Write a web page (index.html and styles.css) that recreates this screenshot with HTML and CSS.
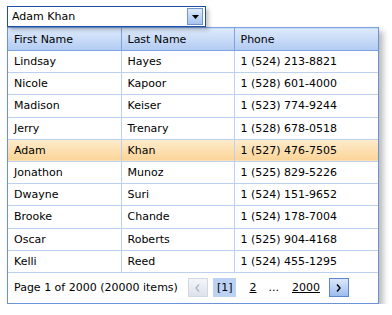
FILE: index.html
```html
<!DOCTYPE html>
<html>
<head>
<meta charset="utf-8">
<link rel="stylesheet" href="styles.css">
</head>
<body>
<div class="wrap">
  <div class="combo">
    <span class="combo-text">Adam Khan</span>
    <span class="combo-btn"><svg width="7" height="4" viewBox="0 0 7 4"><path d="M0 0h7L3.5 4z" fill="#000"/></svg></span>
  </div>
  <div class="grid">
    <table>
      <colgroup><col class="c1"><col class="c2"><col></colgroup>
      <thead>
        <tr><th>First Name</th><th>Last Name</th><th>Phone</th></tr>
      </thead>
      <tbody>
        <tr><td>Lindsay</td><td>Hayes</td><td>1 (524) 213-8821</td></tr>
        <tr><td>Nicole</td><td>Kapoor</td><td>1 (528) 601-4000</td></tr>
        <tr><td>Madison</td><td>Keiser</td><td>1 (523) 774-9244</td></tr>
        <tr><td>Jerry</td><td>Trenary</td><td>1 (528) 678-0518</td></tr>
        <tr class="sel"><td>Adam</td><td>Khan</td><td>1 (527) 476-7505</td></tr>
        <tr><td>Jonathon</td><td>Munoz</td><td>1 (525) 829-5226</td></tr>
        <tr><td>Dwayne</td><td>Suri</td><td>1 (524) 151-9652</td></tr>
        <tr><td>Brooke</td><td>Chande</td><td>1 (524) 178-7004</td></tr>
        <tr><td>Oscar</td><td>Roberts</td><td>1 (525) 904-4168</td></tr>
        <tr><td>Kelli</td><td>Reed</td><td>1 (524) 455-1295</td></tr>
      </tbody>
    </table>
    <div class="pager">
      <span class="summary">Page 1 of 2000 (20000 items)</span>
      <span class="pbtn prev"><svg width="5" height="8" viewBox="0 0 5 8"><path d="M4 0.5L1 4l3 3.5" fill="none" stroke="#a9b4c4" stroke-width="1.3"/></svg></span>
      <span class="cur">[1]</span>
      <a class="pnum n2">2</a>
      <span class="dots">...</span>
      <a class="pnum n2000">2000</a>
      <span class="pbtn next"><svg width="5" height="8" viewBox="0 0 5 8"><path d="M1 0.5L4 4l-3 3.5" fill="none" stroke="#000" stroke-width="1.4"/></svg></span>
    </div>
  </div>
</div>
</body>
</html>
```
FILE: styles.css
```css
html, body {
  margin: 0;
  padding: 0;
  background: #fff;
}
body {
  font-family: Tahoma, "DejaVu Sans", sans-serif;
  font-size: 11px;
  color: #000;
}
.wrap {
  padding: 6px 0 0 7px;
}
.combo {
  width: 197px;
  height: 19px;
  border: 1px solid #1f4ea8;
  background: #fff;
  display: flex;
  align-items: center;
  justify-content: space-between;
  box-shadow: 3px 3px 4px rgba(0,0,0,0.22);
  position: relative;
  z-index: 1;
}
.combo-text {
  padding-left: 4px;
}
.combo-btn {
  width: 14px;
  height: 15px;
  margin-right: 2px;
  border: 1px solid #6f93d3;
  background: linear-gradient(#dfeafc, #a8c3f0);
  display: flex;
  align-items: center;
  justify-content: center;
}
.grid {
  width: 370px;
  border: 1px solid #6b93d6;
  border-top: none;
  box-shadow: 4px 4px 6px rgba(0,0,0,0.28);
  background: #fff;
}
table {
  border-collapse: collapse;
  width: 100%;
  table-layout: fixed;
}
.c1 { width: 113px; }
.c2 { width: 113px; }
th {
  height: 22px;
  padding: 0 0 0 6px;
  text-align: left;
  font-weight: normal;
  background: linear-gradient(#deeafc, #b2cbf2);
  border: 1px solid #7ea3de;
}
th:first-child { border-left: none; }
th:last-child { border-right: none; }
td {
  height: 21.2px;
  padding: 0 0 0 6px;
  border: 1px solid #bdd0f0;
  white-space: nowrap;
}
td:first-child { border-left: none; }
td:last-child { border-right: none; }
tr.sel td {
  background: linear-gradient(#fdeccd, #fbd497);
}
.pager {
  height: 30px;
  display: flex;
  align-items: center;
  padding-left: 6px;
}
.summary {
  margin-right: 10px;
}
.pbtn {
  width: 20px;
  height: 19px;
  box-sizing: border-box;
  display: flex;
  align-items: center;
  justify-content: center;
}
.prev {
  border: 1px solid #d3d9e2;
  background: linear-gradient(#f3f5f8, #dde2ea);
}
.next {
  border: 1px solid #5f86cc;
  background: linear-gradient(#dce8fc, #9ebcef);
  margin-left: 9px;
}
.cur {
  background: #bcd2f4;
  padding: 3px 4px;
  margin-left: 5px;
}
.pnum {
  text-decoration: underline;
  color: #000;
}
.n2 { margin-left: 13px; }
.dots { margin-left: 12px; }
.n2000 { margin-left: 13px; }
```
